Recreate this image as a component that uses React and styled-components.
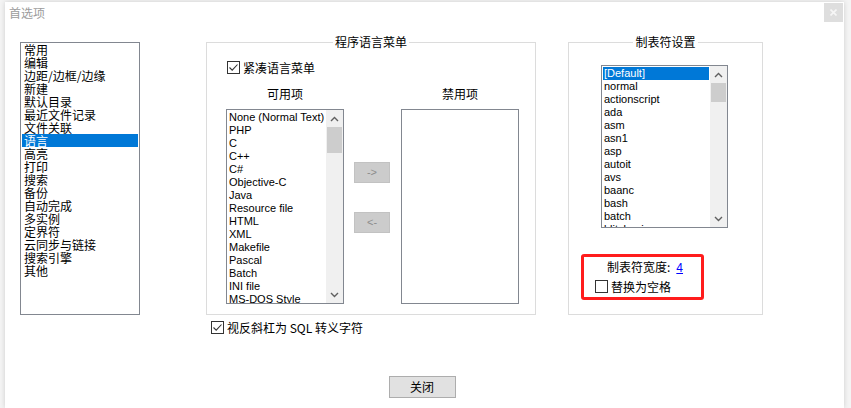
import React from 'react';
import styled, { createGlobalStyle } from 'styled-components';

const CJK = `"Noto Sans CJK SC", "Noto Sans", sans-serif`;
const LATIN = `"Liberation Sans", Arial, "Noto Sans CJK SC", sans-serif`;

const GlobalStyle = createGlobalStyle`
  html, body { margin: 0; padding: 0; }
  body { width: 851px; height: 408px; overflow: hidden; background: #f2f2f2; font-family: ${CJK}; }
  #root { width: 851px; height: 408px; }
`;

const Page = styled.div`
  width: 851px;
  height: 408px;
  box-sizing: border-box;
  padding: 2px 7px 0 5px;
  display: flex;
  background: #f4f4f4;
`;

const Window = styled.div`
  flex: 1;
  background: #fff;
  display: flex;
  flex-direction: column;
  box-shadow: 0 0 5px rgba(0, 0, 0, 0.16);
`;

const TitleBar = styled.div`
  height: 20px;
  display: flex;
  justify-content: space-between;
  align-items: flex-start;
  padding-left: 4px;
`;

const Title = styled.span`
  font: 12px/20px ${CJK};
  color: #9c9c9c;
  margin-top: 1px;
`;

const CloseBtn = styled.div`
  width: 19px;
  height: 19px;
  margin: 1px 1px 0 0;
  background: #dedede;
  display: flex;
  align-items: center;
  justify-content: center;
`;

const Main = styled.div`
  display: grid;
  grid-template-columns: 120px 66px 330px 32px 195px;
  padding: 13px 0 0 15px;
`;

const NavList = styled.div`
  grid-column: 1;
  margin-top: 7px;
  height: 273px;
  box-sizing: border-box;
  border: 1px solid #828790;
  padding: 0 1px;
  display: flex;
  flex-direction: column;
`;

const NavItem = styled.div`
  height: 13px;
  font: 12px/13px ${CJK};
  padding-left: 2px;
  color: ${p => (p.$selected ? '#fff' : '#000')};
  background: ${p => (p.$selected ? '#0078d7' : 'transparent')};
  white-space: nowrap;
`;

const Group = styled.fieldset`
  grid-column: ${p => p.$col};
  margin: 0;
  padding: 0;
  min-width: 0;
  height: 280px;
  box-sizing: border-box;
  border: 1px solid #dcdcdc;
  display: flex;
  flex-direction: column;
  align-items: flex-start;
`;

const Legend = styled.legend`
  margin: 0 auto;
  padding: 0 2px;
  font: 12px/14px ${CJK};
  color: #000;
`;

const CheckRow = styled.label`
  display: flex;
  align-items: center;
  gap: 3px;
  height: 15px;
  font: 12px/15px ${CJK};
  color: #000;
  margin-top: ${p => p.$top || 0}px;
  margin-left: ${p => p.$left || 0}px;
  white-space: nowrap;
`;

const Box = styled.span`
  width: 13px;
  height: 13px;
  box-sizing: border-box;
  border: 1px solid #333;
  background: #fff;
  display: flex;
  align-items: center;
  justify-content: center;
  flex: none;
`;

const Checkbox = ({ checked }) => (
  <Box>
    {checked && (
      <svg width="11" height="11" viewBox="0 0 11 11">
        <path d="M1.5 5.5 L4.2 8.2 L9.5 2.5" fill="none" stroke="#333" strokeWidth="1.1" />
      </svg>
    )}
  </Box>
);

const Transfer = styled.div`
  display: grid;
  grid-template-columns: 118px 10px 36px 11px 118px;
  grid-template-rows: 14px 195px;
  row-gap: 8px;
  margin: 12px 0 0 19px;
`;

const ColHead = styled.div`
  grid-row: 1;
  grid-column: ${p => p.$col};
  text-align: center;
  font: 12px/14px ${CJK};
  color: #000;
`;

const ListBox = styled.div`
  grid-row: ${p => p.$row || 'auto'};
  grid-column: ${p => p.$col || 'auto'};
  width: ${p => p.$w || 'auto'};
  height: ${p => p.$h || 'auto'};
  box-sizing: border-box;
  border: 1px solid #828790;
  background: #fff;
  display: flex;
  overflow: hidden;
  flex: none;
  margin-left: ${p => p.$left || 0}px;
  margin-top: ${p => p.$top || 0}px;
`;

const Items = styled.div`
  flex: 1;
  padding: 1px;
  min-width: 0;
  overflow: hidden;
`;

const Item = styled.div`
  height: 13px;
  font: 11px/13px ${LATIN};
  padding-left: 1px;
  white-space: nowrap;
  color: ${p => (p.$selected ? '#fff' : '#000')};
  background: ${p => (p.$selected ? '#0078d7' : 'transparent')};
`;

const Scrollbar = styled.div`
  width: 17px;
  flex: none;
  background: #f0f0f0;
  display: flex;
  flex-direction: column;
`;

const ArrowCell = styled.div`
  height: 17px;
  display: flex;
  align-items: center;
  justify-content: center;
  flex: none;
`;

const Track = styled.div`
  flex: 1;
  display: flex;
  flex-direction: column;
`;

const Thumb = styled.div`
  height: ${p => p.$h}px;
  margin: 0 1px;
  background: #cdcdcd;
`;

const Chevron = ({ up }) => (
  <svg width="9" height="6" viewBox="0 0 9 6">
    <path
      d={up ? 'M1 5 L4.5 1.5 L8 5' : 'M1 1 L4.5 4.5 L8 1'}
      fill="none"
      stroke="#606060"
      strokeWidth="1.4"
    />
  </svg>
);

const VScroll = ({ thumb }) => (
  <Scrollbar>
    <ArrowCell>
      <Chevron up />
    </ArrowCell>
    <Track>
      <Thumb $h={thumb} />
    </Track>
    <ArrowCell>
      <Chevron />
    </ArrowCell>
  </Scrollbar>
);

const MoveCol = styled.div`
  grid-row: 2;
  grid-column: 3;
  display: flex;
  flex-direction: column;
  gap: 29px;
  padding-top: 53px;
`;

const MoveBtn = styled.div`
  width: 36px;
  height: 21px;
  box-sizing: border-box;
  background: #cccccc;
  border: 1px solid #c2c2c2;
  color: #8c8c8c;
  font: 11px/19px ${LATIN};
  text-align: center;
`;

const RedBox = styled.div`
  width: 123px;
  height: 46px;
  box-sizing: border-box;
  border: 3px solid #ff1c1c;
  border-radius: 3px;
  margin: 26px 0 0 12px;
  display: flex;
  flex-direction: column;
  padding-top: 3px;
`;

const WidthRow = styled.div`
  font: 12px/14px ${CJK};
  color: #000;
  padding-left: 23px;
  white-space: nowrap;
`;

const Link = styled.a`
  color: #0000ff;
  text-decoration: underline;
  font-family: ${LATIN};
  margin-left: 6px;
`;

const SqlRow = styled.div`
  grid-column: 3;
  margin-top: 5px;
`;

const Footer = styled.div`
  margin-top: auto;
  display: flex;
  justify-content: center;
  padding: 0 5px 10px 0;
`;

const Button = styled.button`
  width: 67px;
  height: 22px;
  box-sizing: border-box;
  background: #e1e1e1;
  border: 1px solid #adadad;
  font: 12px/18px ${CJK};
  color: #000;
  padding: 0;
`;

const navItems = [
  '常用', '编辑', '边距/边框/边缘', '新建', '默认目录', '最近文件记录', '文件关联', '语言',
  '高亮', '打印', '搜索', '备份', '自动完成', '多实例', '定界符', '云同步与链接', '搜索引擎', '其他',
];

const langs = [
  'None (Normal Text)', 'PHP', 'C', 'C++', 'C#', 'Objective-C', 'Java', 'Resource file',
  'HTML', 'XML', 'Makefile', 'Pascal', 'Batch', 'INI file', 'MS-DOS Style',
];

const tabLangs = [
  '[Default]', 'normal', 'actionscript', 'ada', 'asm', 'asn1', 'asp', 'autoit', 'avs',
  'baanc', 'bash', 'batch', 'blitzbasic',
];

export default function App() {
  return (
    <>
      <GlobalStyle />
      <Page>
        <Window>
          <TitleBar>
            <Title>首选项</Title>
            <CloseBtn>
              <svg width="7" height="7" viewBox="0 0 7 7">
                <path d="M0.5 0.5 L6.5 6.5 M6.5 0.5 L0.5 6.5" stroke="#f6f6f6" strokeWidth="1.6" />
              </svg>
            </CloseBtn>
          </TitleBar>
          <Main>
            <NavList>
              {navItems.map(n => (
                <NavItem key={n} $selected={n === '语言'}>{n}</NavItem>
              ))}
            </NavList>

            <Group $col={3}>
              <Legend>程序语言菜单</Legend>
              <CheckRow $top={11} $left={20}>
                <Checkbox checked />
                紧凑语言菜单
              </CheckRow>
              <Transfer>
                <ColHead $col={1}>可用项</ColHead>
                <ColHead $col={5}>禁用项</ColHead>
                <ListBox $row={2} $col={1}>
                  <Items>
                    {langs.map(l => (
                      <Item key={l}>{l}</Item>
                    ))}
                  </Items>
                  <VScroll thumb={26} />
                </ListBox>
                <MoveCol>
                  <MoveBtn>-&gt;</MoveBtn>
                  <MoveBtn>&lt;-</MoveBtn>
                </MoveCol>
                <ListBox $row={2} $col={5} />
              </Transfer>
            </Group>

            <Group $col={5}>
              <Legend>制表符设置</Legend>
              <ListBox $w="127px" $h="163px" $left={32} $top={16}>
                <Items>
                  {tabLangs.map((l, i) => (
                    <Item key={l} $selected={i === 0}>{l}</Item>
                  ))}
                </Items>
                <VScroll thumb={19} />
              </ListBox>
              <RedBox>
                <WidthRow>
                  制表符宽度:<Link href="#">4</Link>
                </WidthRow>
                <CheckRow $top={4} $left={11}>
                  <Checkbox />
                  替换为空格
                </CheckRow>
              </RedBox>
            </Group>

            <SqlRow>
              <CheckRow $left={5}>
                <Checkbox checked />
                视反斜杠为 SQL 转义字符
              </CheckRow>
            </SqlRow>
          </Main>
          <Footer>
            <Button>关闭</Button>
          </Footer>
        </Window>
      </Page>
    </>
  );
}
